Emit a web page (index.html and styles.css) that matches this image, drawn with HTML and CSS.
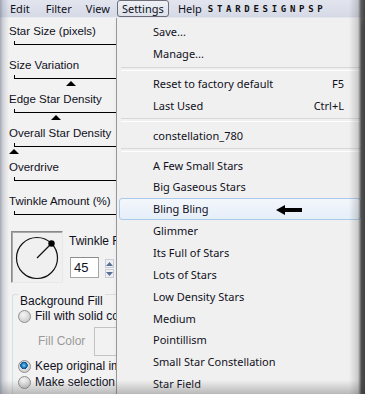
FILE: index.html
```html
<!DOCTYPE html>
<html>
<head>
<meta charset="utf-8">
<link rel="stylesheet" href="styles.css">
</head>
<body>
<div class="app">
  <div class="menubar">
    <span class="mb-item">Edit</span>
    <span class="mb-item">Filter</span>
    <span class="mb-item">View</span>
    <span class="mb-item active">Settings</span>
    <span class="mb-item">Help</span>
    <span class="brand">STARDESIGNPSP</span>
  </div>

  <div class="panel">
    <div class="slider">
      <div class="label">Star Size (pixels)</div>
      <div class="track"></div>
    </div>
    <div class="slider">
      <div class="label">Size Variation</div>
      <div class="track"><span class="thumb" style="left:51px"></span></div>
    </div>
    <div class="slider">
      <div class="label">Edge Star Density</div>
      <div class="track"><span class="thumb" style="left:36px"></span></div>
    </div>
    <div class="slider">
      <div class="label">Overall Star Density</div>
      <div class="track"><span class="thumb" style="left:-6px"></span></div>
    </div>
    <div class="slider">
      <div class="label">Overdrive</div>
      <div class="track"></div>
    </div>
    <div class="slider">
      <div class="label">Twinkle Amount (%)</div>
      <div class="track"></div>
    </div>

    <div class="twinkle-row">
      <div class="angle-box">
        <svg width="50" height="50" viewBox="0 0 50 50">
          <circle cx="25" cy="26" r="20.5" fill="none" stroke="#111" stroke-width="1.2"/>
          <line x1="25" y1="26" x2="39" y2="12" stroke="#111" stroke-width="1.2"/>
          <circle cx="39.5" cy="11.5" r="3.2" fill="#000"/>
        </svg>
      </div>
      <div class="twinkle-ctrl">
        <div class="tw-label">Twinkle Rotation</div>
        <div class="spin-row">
          <div class="num-input">45</div>
          <div class="spinner">
            <span class="sp-btn"><svg width="7" height="4" viewBox="0 0 7 4"><path d="M0 4 L3.5 0 L7 4Z" fill="#5a6f95"/></svg></span>
            <span class="sp-btn"><svg width="7" height="4" viewBox="0 0 7 4"><path d="M0 0 L3.5 4 L7 0Z" fill="#5a6f95"/></svg></span>
          </div>
        </div>
      </div>
    </div>

    <div class="group">
      <div class="group-title">Background Fill</div>
      <div class="radio-row"><span class="radio"></span><span>Fill with solid color</span></div>
      <div class="fill-row"><span class="fill-label">Fill Color</span><span class="swatch"></span></div>
      <div class="radio-row"><span class="radio checked"></span><span>Keep original image</span></div>
      <div class="radio-row"><span class="radio"></span><span>Make selection transparent</span></div>
    </div>
  </div>

  <div class="dropdown">
    <div class="mi">Save...</div>
    <div class="mi">Manage...</div>
    <div class="sep"></div>
    <div class="mi"><span>Reset to factory default</span><span class="key">F5</span></div>
    <div class="mi"><span>Last Used</span><span class="key">Ctrl+L</span></div>
    <div class="sep"></div>
    <div class="mi">constellation_780</div>
    <div class="sep"></div>
    <div class="mi">A Few Small Stars</div>
    <div class="mi">Big Gaseous Stars</div>
    <div class="mi hot"><span>Bling Bling</span>
      <svg class="arrow" width="27" height="10" viewBox="0 0 27 10"><path d="M0 5 L9 0 L9 3 L26 3 L26 7 L9 7 L9 10 Z" fill="#000"/></svg>
    </div>
    <div class="mi">Glimmer</div>
    <div class="mi">Its Full of Stars</div>
    <div class="mi">Lots of Stars</div>
    <div class="mi">Low Density Stars</div>
    <div class="mi">Medium</div>
    <div class="mi">Pointillism</div>
    <div class="mi">Small Star Constellation</div>
    <div class="mi">Star Field</div>
  </div>

  <div class="frame"></div>
</div>
</body>
</html>
```

FILE: styles.css
```css
* { box-sizing: border-box; }
html, body { margin: 0; padding: 0; }
body {
  width: 365px;
  height: 394px;
  overflow: hidden;
  background: #f0f0f0;
  font-family: "Noto Sans", "Open Sans", sans-serif;
  font-size: 12px;
  color: #10101c;
}
.app {
  position: relative;
  width: 365px;
  height: 394px;
  overflow: hidden;
  display: flex;
  flex-direction: column;
}
.menubar {
  height: 18px;
  flex: none;
  display: flex;
  align-items: stretch;
  padding-left: 6px;
  background: linear-gradient(to bottom, #e2e5ee, #d6dae6);
  border-bottom: 1px solid #e9ebf1;
  font-size: 11px;
}
.mb-item {
  display: flex;
  align-items: center;
  padding: 0 4px;
  line-height: 16px;
  height: 17px;
}
.mb-item:nth-child(2) { margin-left: 8px; }
.mb-item:nth-child(3) { margin-left: 6px; }
.mb-item.active {
  margin-left: 3px;
  border: 1px solid #6e6e78;
  border-radius: 3px;
  background: linear-gradient(to bottom, #eef0f5, #dde1ea);
  padding: 0 4px 0 4px;
  width: 52px;
  flex: none;
}
.mb-item:nth-child(5) { margin-left: 7px; padding: 0 2px; }
.brand {
  margin-left: 4px;
  display: flex;
  align-items: center;
  font-family: "DejaVu Sans Mono", monospace;
  font-weight: bold;
  font-size: 9px;
  letter-spacing: 3.7px;
  color: #111;
}

.panel {
  flex: 1;
  padding: 6px 0 0 9px;
  background: #f2f2f2;
  font-family: "Liberation Sans", sans-serif;
  font-size: 11.5px;
}
.slider {
  height: 34px;
}
.label {
  line-height: 14px;
  height: 15px;
  white-space: nowrap;
}
.track {
  position: relative;
  margin-left: 5px;
  margin-top: 2px;
  width: 200px;
  height: 4px;
  border-left: 1px solid #000;
  border-bottom: 1px solid #000;
}
.thumb {
  position: absolute;
  top: 6px;
  width: 0;
  height: 0;
  border-left: 5.5px solid transparent;
  border-right: 5.5px solid transparent;
  border-bottom: 5px solid #000;
}
.twinkle-row {
  display: flex;
  gap: 6px;
  margin-top: 3px;
  margin-left: 2px;
}
.angle-box {
  width: 52px;
  height: 52px;
  flex: none;
  border: 1px solid;
  border-color: #8a8a8a #e8e8e8 #e8e8e8 #8a8a8a;
  box-shadow: inset 1px 1px 0 #a8a8a8;
  background: #f0f0f0;
}
.angle-box svg { display: block; }
.twinkle-ctrl {
  display: flex;
  flex-direction: column;
}
.tw-label {
  font-size: 12px;
  line-height: 14px;
  margin-top: 3px;
  white-space: nowrap;
}
.spin-row {
  display: flex;
  gap: 6px;
  margin-top: 9px;
  margin-left: 1px;
}
.num-input {
  width: 29px;
  height: 21px;
  flex: none;
  border: 1px solid #a6a6a6;
  border-top-color: #8d8d8d;
  background: #fff;
  padding: 2px 0 0 3px;
  font-size: 13px;
  line-height: 16px;
}
.spinner {
  display: flex;
  flex-direction: column;
  gap: 1px;
  margin-top: 2px;
}
.sp-btn {
  width: 9px;
  height: 9px;
  display: flex;
  align-items: center;
  justify-content: center;
  border: 1px solid #c8ccd6;
  background: #eef0f4;
}
.group {
  margin-top: 11px;
  margin-left: 3px;
  border: 1px solid #d5dfe5;
  border-right: none;
  border-radius: 3px 0 0 0;
  padding: 0 0 0 5px;
  height: 120px;
}
.group-title {
  display: inline-block;
  margin-top: -8px;
  padding: 0 2px;
  background: #f2f2f2;
  line-height: 14px;
  font-size: 12px;
}
.radio-row {
  display: flex;
  align-items: center;
  gap: 4px;
  height: 16px;
  font-size: 12px;
  white-space: nowrap;
}
.radio {
  width: 13px;
  height: 13px;
  flex: none;
  border-radius: 50%;
  border: 1px solid #8f8f8f;
  background: radial-gradient(circle at 40% 35%, #f6f6f6, #d0d0d0 70%);
}
.radio.checked {
  background:
    radial-gradient(circle at 45% 40%, #7fd0f5 0, #1a74b8 2.5px, #0b4f8a 3.5px, transparent 4px),
    radial-gradient(circle at 40% 35%, #f6f6f6, #d0d0d0 70%);
}
.fill-row {
  display: flex;
  align-items: center;
  gap: 9px;
  height: 34px;
  padding-left: 20px;
  color: #9a9a9a;
  font-size: 12px;
  white-space: nowrap;
}
.swatch {
  width: 30px;
  height: 29px;
  flex: none;
  border: 1px solid #c4c4c4;
  background: #f2f2f2;
}

.dropdown {
  position: absolute;
  left: 116px;
  top: 18px;
  width: 245px;
  height: 380px;
  background: #f0f0f0;
  border-left: 1px solid #979797;
  padding: 3px 0 0 2px;
  box-shadow: 4px 4px 6px rgba(0,0,0,0.3);
  font-family: "Noto Sans", sans-serif;
  font-size: 11px;
}
.mi {
  position: relative;
  height: 21.85px;
  display: flex;
  align-items: center;
  padding-left: 33px;
  padding-right: 16px;
  border: 1px solid transparent;
  border-radius: 3px;
  white-space: nowrap;
}
.mi .key { margin-left: auto; }
.sep {
  height: 8px;
  margin: 0 0 0 2px;
  display: flex;
  align-items: center;
}
.sep::before {
  content: "";
  display: block;
  width: 100%;
  height: 2px;
  border-top: 1px solid #d7d7d7;
  border-bottom: 1px solid #ffffff;
}
.mi.hot {
  border-color: #a8cbeb;
  background: linear-gradient(to bottom, #f3f7fc, #e6eef8);
}
.arrow {
  position: absolute;
  left: 156px;
  top: 6px;
}

.frame {
  position: absolute;
  inset: 0;
  pointer-events: none;
  background:
    linear-gradient(to right, rgba(110,118,138,0.6), rgba(110,118,138,0.25) 3px, rgba(110,118,138,0) 9px),
    linear-gradient(to left, rgba(50,50,50,0.9), rgba(50,50,50,0.75) 4px, rgba(90,90,90,0.25) 7px, rgba(0,0,0,0) 16px),
    linear-gradient(to top, rgba(80,80,80,0.35), rgba(0,0,0,0) 14px);
}
```
